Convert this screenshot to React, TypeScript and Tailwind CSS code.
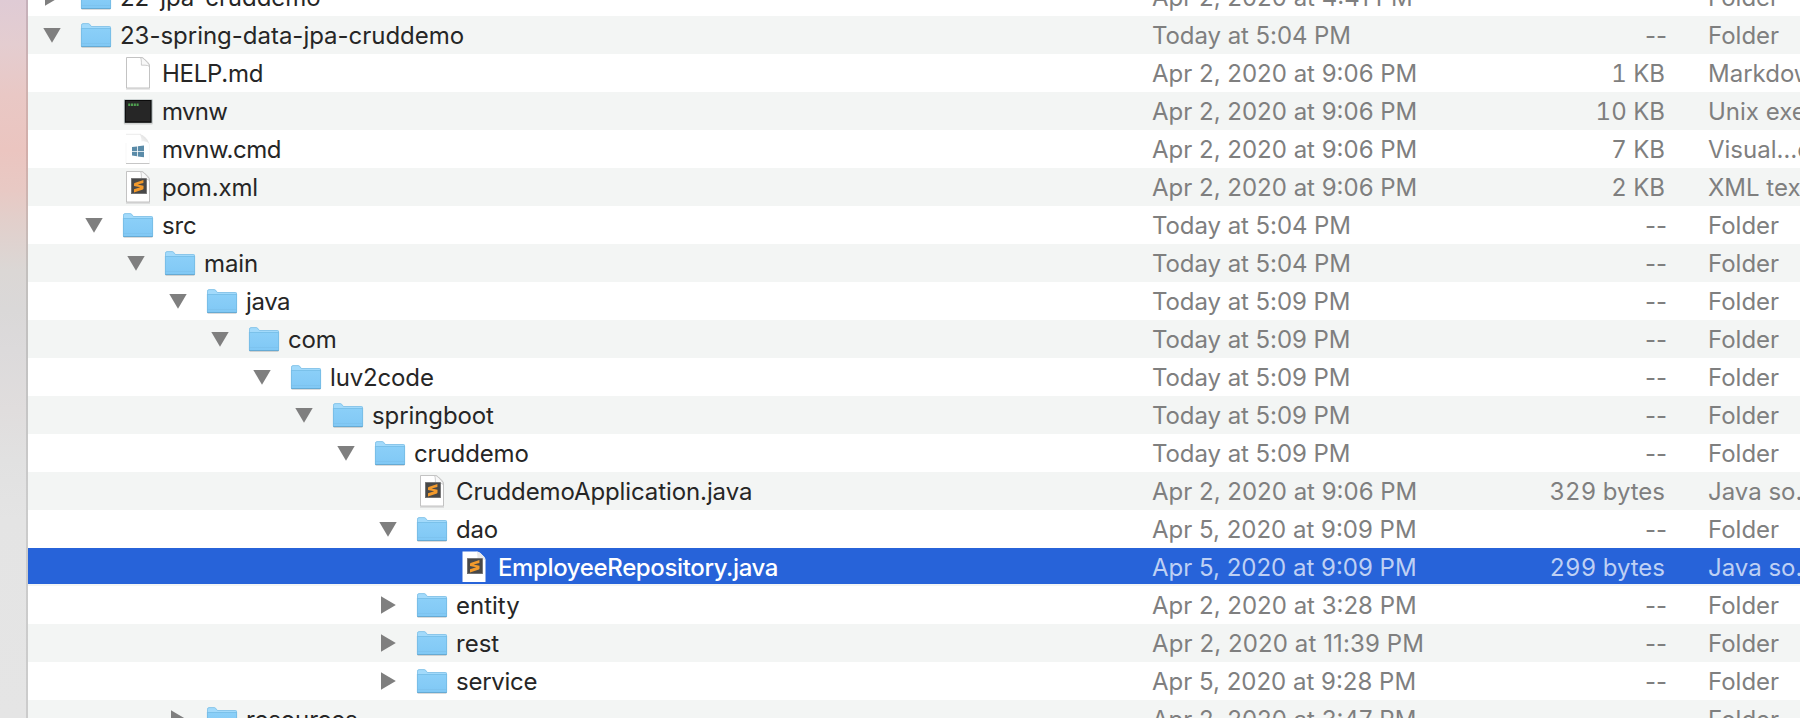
import React from "react";

type Kind = "folder" | "doc" | "exec" | "windows" | "sublime";
type Entry = {
  name: string;
  depth: number;
  kind: Kind;
  open?: boolean;
  date: string;
  size: string;
  type: string;
  selected?: boolean;
  tracking?: string;
};

const entries: Entry[] = [
  { name: "22-jpa-cruddemo", depth: 0, kind: "folder", date: "Apr 2, 2020 at 4:41 PM", size: "--", type: "Folder", tracking: "tracking-[-0.05px]" },
  { name: "23-spring-data-jpa-cruddemo", depth: 0, kind: "folder", open: true, date: "Today at 5:04 PM", size: "--", type: "Folder", tracking: "tracking-[-0.02px]" },
  { name: "HELP.md", depth: 1, kind: "doc", date: "Apr 2, 2020 at 9:06 PM", size: "1 KB", type: "Markdown", tracking: "tracking-[-0.25px]" },
  { name: "mvnw", depth: 1, kind: "exec", date: "Apr 2, 2020 at 9:06 PM", size: "10 KB", type: "Unix executable", tracking: "tracking-[-0.7px]" },
  { name: "mvnw.cmd", depth: 1, kind: "windows", date: "Apr 2, 2020 at 9:06 PM", size: "7 KB", type: "Visual…cument", tracking: "tracking-[-0.45px]" },
  { name: "pom.xml", depth: 1, kind: "sublime", date: "Apr 2, 2020 at 9:06 PM", size: "2 KB", type: "XML text", tracking: "tracking-[-0.15px]" },
  { name: "src", depth: 1, kind: "folder", open: true, date: "Today at 5:04 PM", size: "--", type: "Folder", tracking: "tracking-[-0.2px]" },
  { name: "main", depth: 2, kind: "folder", open: true, date: "Today at 5:04 PM", size: "--", type: "Folder", tracking: "tracking-[-0.1px]" },
  { name: "java", depth: 3, kind: "folder", open: true, date: "Today at 5:09 PM", size: "--", type: "Folder", tracking: "tracking-[-0.4px]" },
  { name: "com", depth: 4, kind: "folder", open: true, date: "Today at 5:09 PM", size: "--", type: "Folder", tracking: "tracking-[-0.2px]" },
  { name: "luv2code", depth: 5, kind: "folder", open: true, date: "Today at 5:09 PM", size: "--", type: "Folder", tracking: "tracking-[-0.15px]" },
  { name: "springboot", depth: 6, kind: "folder", open: true, date: "Today at 5:09 PM", size: "--", type: "Folder", tracking: "tracking-[-0.1px]" },
  { name: "cruddemo", depth: 7, kind: "folder", open: true, date: "Today at 5:09 PM", size: "--", type: "Folder", tracking: "tracking-[-0.12px]" },
  { name: "CruddemoApplication.java", depth: 8, kind: "sublime", date: "Apr 2, 2020 at 9:06 PM", size: "329 bytes", type: "Java so…e", tracking: "tracking-[-0.1px]" },
  { name: "dao", depth: 8, kind: "folder", open: true, date: "Apr 5, 2020 at 9:09 PM", size: "--", type: "Folder", tracking: "tracking-[-0.2px]" },
  { name: "EmployeeRepository.java", depth: 9, kind: "sublime", date: "Apr 5, 2020 at 9:09 PM", size: "299 bytes", type: "Java so…e", selected: true, tracking: "tracking-[-0.37px]" },
  { name: "entity", depth: 8, kind: "folder", date: "Apr 2, 2020 at 3:28 PM", size: "--", type: "Folder" },
  { name: "rest", depth: 8, kind: "folder", date: "Apr 2, 2020 at 11:39 PM", size: "--", type: "Folder" },
  { name: "service", depth: 8, kind: "folder", date: "Apr 5, 2020 at 9:28 PM", size: "--", type: "Folder", tracking: "tracking-[-0.25px]" },
  { name: "resources", depth: 3, kind: "folder", date: "Apr 2, 2020 at 3:47 PM", size: "--", type: "Folder", tracking: "tracking-[-0.15px]" },
];

function Folder() {
  return (
    <svg width="38" height="38" viewBox="0 0 38 38">
      <defs>
        <linearGradient id="folderFront" x1="0" y1="0" x2="0" y2="1">
          <stop offset="0" stopColor="#8bcff8" />
          <stop offset="1" stopColor="#80c8f5" />
        </linearGradient>
      </defs>
      <rect x="4.6" y="30" width="28.8" height="2" fill="#000" opacity=".14" />
      <path d="M4 9.2Q4 7.4 5.8 7.4H11.4Q12.4 7.4 13 8.2L14 9.6Q14.4 10.2 15.2 10.2H32.6Q34 10.2 34 11.6V30H4Z" fill="#a2dafb" />
      <path d="M4.5 12V9.4Q4.5 7.6 6 7.6H11.2Q12.2 7.6 12.7 8.4L13.6 9.8Q14 10.5 14.8 10.5H32.4Q33.5 10.5 33.5 11.8V12" fill="none" stroke="#84c3e8" strokeWidth=".9" />
      <path d="M4 12.6H34V30Q34 31 33 31H5Q4 31 4 30Z" fill="url(#folderFront)" />
      <path d="M4.4 12.5H33.6" stroke="#77bee8" strokeWidth=".9" />
      <path d="M4.4 27.6H33.6" stroke="#76bbe4" strokeWidth=".6" opacity=".7" />
      <path d="M4.2 30.5H33.8" stroke="#66aad3" strokeWidth="1" />
      <path d="M4.4 12V30M33.6 12V30" stroke="#74b9e1" strokeWidth=".8" />
    </svg>
  );
}

function Page({ outline = true }: { outline?: boolean }) {
  return (
    <>
      {outline && <path d="M7 35H31" stroke="#000" opacity=".14" strokeWidth="1.2" />}
      <path
        d="M7.5 3.5H22Q24 3.5 25.4 5L29.2 8.8Q30.5 10.2 30.5 12V34H7.5Z"
        fill="#fff"
        stroke={outline ? "#bcbcbc" : "none"}
        strokeWidth=".9"
      />
      <path
        d="M21.5 3.5Q22.4 5 22.4 8.2V11.2H26Q29 11.2 30.5 12.6Q30.2 10.4 28.6 8.8L25 5Q23.4 3.5 21.5 3.5Z"
        fill={outline ? "#f8f8f8" : "#e9e9e9"}
        stroke={outline ? "#c0c0c0" : "none"}
        strokeWidth=".8"
      />
    </>
  );
}

function FileIcon({ kind, selected }: { kind: Kind; selected?: boolean }) {
  if (kind === "folder") return <Folder />;
  if (kind === "exec")
    return (
      <svg width="38" height="38" viewBox="0 0 38 38">
        <rect x="4.8" y="7.5" width="29" height="25" rx="1" fill="#000" opacity=".15" />
        <rect x="5" y="7.5" width="28.4" height="23.3" fill="#b9c4c6" />
        <rect x="5.8" y="8" width="26.8" height="22.8" fill="#0b0b0b" />
        <rect x="6.8" y="9" width="24.6" height="20.4" fill="#262626" />
        <path d="M9.2 12.8H19.6" stroke="#4f9e50" strokeWidth="2.4" strokeDasharray="2.1 .7" />
      </svg>
    );
  if (kind === "windows")
    return (
      <svg width="38" height="38" viewBox="0 0 38 38">
        <defs>
          <linearGradient id="curl" x1="0" y1="1" x2="1" y2="0">
            <stop offset="0" stopColor="#fff" />
            <stop offset="1" stopColor="#d2d2d2" />
          </linearGradient>
        </defs>
        <path d="M7 4.3H22" stroke="#ececec" />
        <path d="M20.5 4Q22.4 6 22.4 11.5Q28 10.8 30.5 14Q29.5 10 26.5 7.4Q24 4.6 20.5 4Z" fill="url(#curl)" />
        <path d="M7 33.5H30.5" stroke="#c6c6c6" />
        <path d="M7 13V33M30.5 14V33" stroke="#f7f7f7" />
        <path d="M13 17.1L18 16.4V20.9H13ZM18.8 16.3L25 15.4V20.9H18.8ZM13 21.7H18V26.3L13 25.6ZM18.8 21.7H25V27.3L18.8 26.4Z" fill="#5a8ba8" />
      </svg>
    );
  return (
    <svg width="38" height="38" viewBox="0 0 38 38">
      <Page outline={!selected} />
      {kind === "sublime" && (
        <>
          <rect x="12.4" y="10.6" width="15" height="15" fill="#484848" stroke="#6c6c6c" strokeWidth=".8" />
          <path d="M24.4 12L15.6 14.9Q15 15.2 15 15.8V18.1L21.2 19.3L15 21.2V24.5L23.9 21.5Q24.5 21.2 24.5 20.6V17.8L18.6 16.6L24.4 14.9Z" fill="#f39a2c" />
        </>
      )}
    </svg>
  );
}

function Disclosure({ open }: { open?: boolean }) {
  return (
    <svg width="18" height="38" viewBox="0 0 18 38" className="shrink-0">
      <path d={open ? "M.3 12H17.7L9 26.8Z" : "M2 10.2V27.8L16.8 19Z"} fill="#7f7f7f" />
    </svg>
  );
}

function Row({ entry, striped }: { entry: Entry; striped: boolean }) {
  const { selected, tracking = "tracking-normal" } = entry;
  const dateTracking = entry.date.startsWith("Today")
    ? "tracking-[-0.07px]"
    : entry.date.includes("11:39")
      ? "tracking-[0.1px]"
      : "tracking-normal";
  return (
    <div className={striped ? "h-[38px] shrink-0 bg-[#f3f5f4]" : "h-[38px] shrink-0 bg-white"}>
      <div
        className={
          selected
            ? "flex h-9 bg-[#2763d9] leading-[40px] whitespace-nowrap text-[#bed0f4]"
            : "flex h-[38px] leading-[40px] whitespace-nowrap text-[#7f7f7f]"
        }
      >
        <div className="flex w-[1124px] shrink-0 pl-[15px]">
          <div className="shrink-0" style={{ width: entry.depth * 42 }} />
          <div className="w-[34px] shrink-0">{entry.kind === "folder" && <Disclosure open={entry.open} />}</div>
          <div className="w-[43px] shrink-0">
            <FileIcon kind={entry.kind} selected={selected} />
          </div>
          <span className={`${tracking} ${selected ? "font-medium text-white" : "text-[#262626]"}`}>{entry.name}</span>
        </div>
        <div className={`w-[330px] shrink-0 ${dateTracking}`}>{entry.date}</div>
        <div className={entry.size === "--" ? "w-[185px] shrink-0 text-right" : "w-[185px] shrink-0 pr-0.5 text-right tabular-nums"}>
          {entry.size}
        </div>
        <div className="ml-[41px] shrink-0">{entry.type}</div>
      </div>
    </div>
  );
}

export default function App() {
  return (
    <div className="flex h-[718px] w-[1800px] overflow-hidden bg-white font-['Inter',sans-serif] text-[24px]">
      <div className="w-[26px] shrink-0 bg-[linear-gradient(to_bottom,#dfcbd5_0px,#e4cdd0_45px,#e9c8c5_95px,#ebc5c0_150px,#e8c9c4_190px,#e2cfcb_220px,#dbd7d5_270px,#dad8d8_310px,#dcdadb_350px,#e0dddd_410px,#e1e1e1_460px,#e4e4e4_520px,#e5e5e5_718px)]" />
      <div className="w-0.5 shrink-0 bg-[linear-gradient(to_bottom,#c5b1bb_0px,#d0b2af_95px,#d3aeaa_150px,#cdb5b1_200px,#c3c0be_270px,#c2c1c1_350px,#cbcbcb_500px,#cccccc_718px)]" />
      <main className="-mt-[22px] flex min-w-0 flex-1 flex-col overflow-hidden">
        {entries.map((entry, i) => (
          <Row key={entry.name} entry={entry} striped={i % 2 === 1} />
        ))}
      </main>
    </div>
  );
}
